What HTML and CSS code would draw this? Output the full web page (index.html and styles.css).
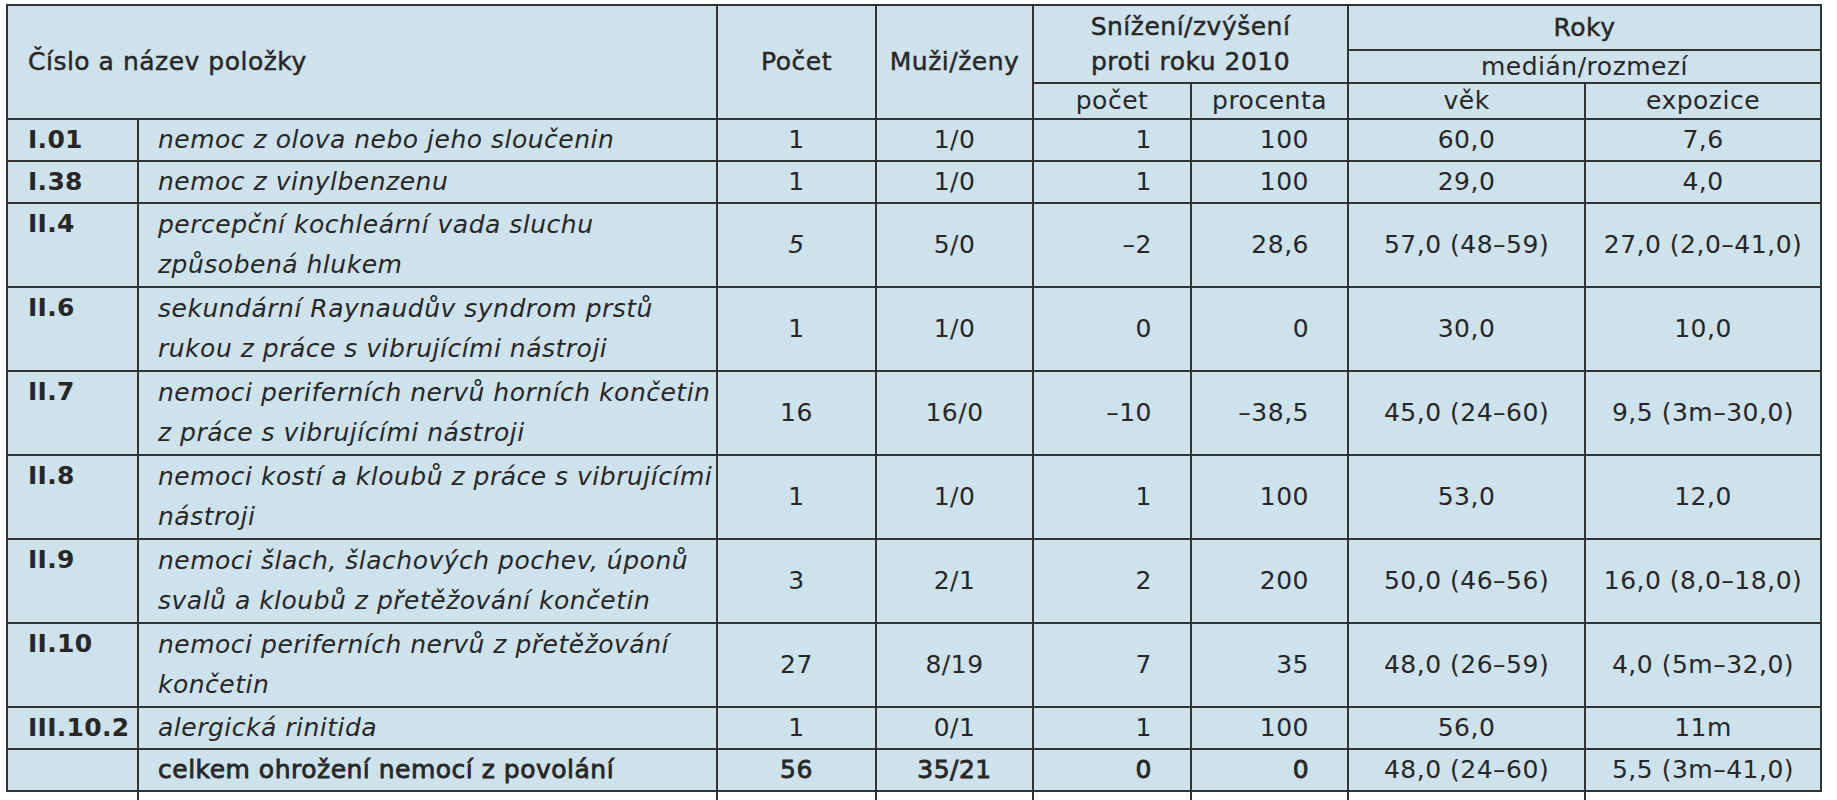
FILE: index.html
```html
<!DOCTYPE html>
<html lang="cs">
<head>
<meta charset="utf-8">
<title>Tabulka</title>
<link rel="stylesheet" href="styles.css">
</head>
<body>
<table class="tbl">
  <colgroup>
    <col class="c-num"><col class="c-name"><col class="c-cnt"><col class="c-mf">
    <col class="c-dp"><col class="c-dq"><col class="c-age"><col class="c-exp">
  </colgroup>
  <thead>
    <tr class="h1">
      <th class="h-name" colspan="2" rowspan="3">Číslo a název položky</th>
      <th class="h-main" rowspan="3">Počet</th>
      <th class="h-main" rowspan="3">Muži/ženy</th>
      <th class="h-main h-two" colspan="2" rowspan="2">Snížení/zvýšení<br>proti roku 2010</th>
      <th class="h-main" colspan="2">Roky</th>
    </tr>
    <tr class="h2">
      <th class="h-sub" colspan="2">medián/rozmezí</th>
    </tr>
    <tr class="h3">
      <th class="h-sub">počet</th>
      <th class="h-sub">procenta</th>
      <th class="h-sub">věk</th>
      <th class="h-sub">expozice</th>
    </tr>
  </thead>
  <tbody>
    <tr class="r1">
      <td class="num">I.01</td><td class="name">nemoc z olova nebo jeho sloučenin</td>
      <td class="ctr">1</td><td class="ctr">1/0</td><td class="rgt">1</td><td class="rgt">100</td><td class="ctr">60,0</td><td class="ctr">7,6</td>
    </tr>
    <tr class="r1">
      <td class="num">I.38</td><td class="name">nemoc z vinylbenzenu</td>
      <td class="ctr">1</td><td class="ctr">1/0</td><td class="rgt">1</td><td class="rgt">100</td><td class="ctr">29,0</td><td class="ctr">4,0</td>
    </tr>
    <tr class="r2">
      <td class="num">II.4</td><td class="name">percepční kochleární vada sluchu<br>způsobená hlukem</td>
      <td class="ctr it">5</td><td class="ctr">5/0</td><td class="rgt">–2</td><td class="rgt">28,6</td><td class="ctr">57,0 (48–59)</td><td class="ctr">27,0 (2,0–41,0)</td>
    </tr>
    <tr class="r2">
      <td class="num">II.6</td><td class="name">sekundární Raynaudův syndrom prstů<br>rukou z práce s vibrujícími nástroji</td>
      <td class="ctr">1</td><td class="ctr">1/0</td><td class="rgt">0</td><td class="rgt">0</td><td class="ctr">30,0</td><td class="ctr">10,0</td>
    </tr>
    <tr class="r2">
      <td class="num">II.7</td><td class="name">nemoci periferních nervů horních končetin<br>z práce s vibrujícími nástroji</td>
      <td class="ctr">16</td><td class="ctr">16/0</td><td class="rgt">–10</td><td class="rgt">–38,5</td><td class="ctr">45,0 (24–60)</td><td class="ctr">9,5 (3m–30,0)</td>
    </tr>
    <tr class="r2">
      <td class="num">II.8</td><td class="name">nemoci kostí a kloubů z práce s vibrujícími<br>nástroji</td>
      <td class="ctr">1</td><td class="ctr">1/0</td><td class="rgt">1</td><td class="rgt">100</td><td class="ctr">53,0</td><td class="ctr">12,0</td>
    </tr>
    <tr class="r2">
      <td class="num">II.9</td><td class="name">nemoci šlach, šlachových pochev, úponů<br>svalů a kloubů z přetěžování končetin</td>
      <td class="ctr">3</td><td class="ctr">2/1</td><td class="rgt">2</td><td class="rgt">200</td><td class="ctr">50,0 (46–56)</td><td class="ctr">16,0 (8,0–18,0)</td>
    </tr>
    <tr class="r2">
      <td class="num">II.10</td><td class="name">nemoci periferních nervů z přetěžování<br>končetin</td>
      <td class="ctr">27</td><td class="ctr">8/19</td><td class="rgt">7</td><td class="rgt">35</td><td class="ctr">48,0 (26–59)</td><td class="ctr">4,0 (5m–32,0)</td>
    </tr>
    <tr class="r1">
      <td class="num">III.10.2</td><td class="name">alergická rinitida</td>
      <td class="ctr">1</td><td class="ctr">0/1</td><td class="rgt">1</td><td class="rgt">100</td><td class="ctr">56,0</td><td class="ctr">11m</td>
    </tr>
    <tr class="r1 total">
      <td class="num"></td><td class="name b">celkem ohrožení nemocí z povolání</td>
      <td class="ctr b">56</td><td class="ctr b">35/21</td><td class="rgt b">0</td><td class="rgt b">0</td><td class="ctr">48,0 (24–60)</td><td class="ctr">5,5 (3m–41,0)</td>
    </tr>
    <tr class="stub">
      <td></td><td></td><td></td><td></td><td></td><td></td><td></td><td></td>
    </tr>
  </tbody>
</table>
</body>
</html>
```

FILE: styles.css
```css
html, body {
  margin: 0;
  padding: 0;
  background: #ffffff;
}

body {
  font-family: "DejaVu Sans", "Liberation Sans", sans-serif;
  color: #272727;
}

.tbl {
  border-collapse: collapse;
  table-layout: fixed;
  width: 1816px;
  margin: 4px 0 0 6px;
  font-size: 25px;
  letter-spacing: 0.5px;
}

.c-num { width: 131px; }
.c-name { width: 579px; }
.c-cnt { width: 159px; }
.c-mf { width: 157px; }
.c-dp { width: 158px; }
.c-dq { width: 157px; }
.c-age { width: 237px; }
.c-exp { width: 236px; }

.tbl th,
.tbl td {
  box-sizing: border-box;
  border: 2px solid #333333;
  background: #cde2eb;
  padding: 0;
  line-height: 40px;
  white-space: nowrap;
  overflow: hidden;
}

.tbl th {
  font-weight: 400;
  -webkit-text-stroke: 0.45px #272727;
  text-align: center;
  vertical-align: middle;
}

.h1 th { height: 45px; }
.h2 th { height: 33px; }
.h3 th { height: 36px; }

.tbl th.h-name {
  text-align: left;
  padding-left: 20px;
}

.tbl th.h-two {
  line-height: 35px;
}

.tbl th.h-sub {
  -webkit-text-stroke: 0;
  line-height: 30px;
}

.r1 td { height: 42px; }
.r2 td { height: 84px; }

.tbl td.num {
  font-weight: 700;
  letter-spacing: 0.3px;
  padding-left: 20px;
  vertical-align: top;
}

.tbl td.name {
  font-style: italic;
  padding-left: 19px;
  vertical-align: middle;
}

.tbl td.ctr {
  text-align: center;
  vertical-align: middle;
}

.tbl td.rgt {
  text-align: right;
  padding-right: 38px;
  vertical-align: middle;
}

.tbl td.it { font-style: italic; }

.tbl td.b,
.tbl td.name.b {
  font-style: normal;
  font-weight: 400;
  -webkit-text-stroke: 0.8px #272727;
}

.tbl .stub td {
  height: 12px;
  line-height: 10px;
  background: transparent;
  border-bottom: none;
}

.tbl .stub td:first-child { border-left: hidden; }
.tbl .stub td:last-child { border-right: hidden; }
```
